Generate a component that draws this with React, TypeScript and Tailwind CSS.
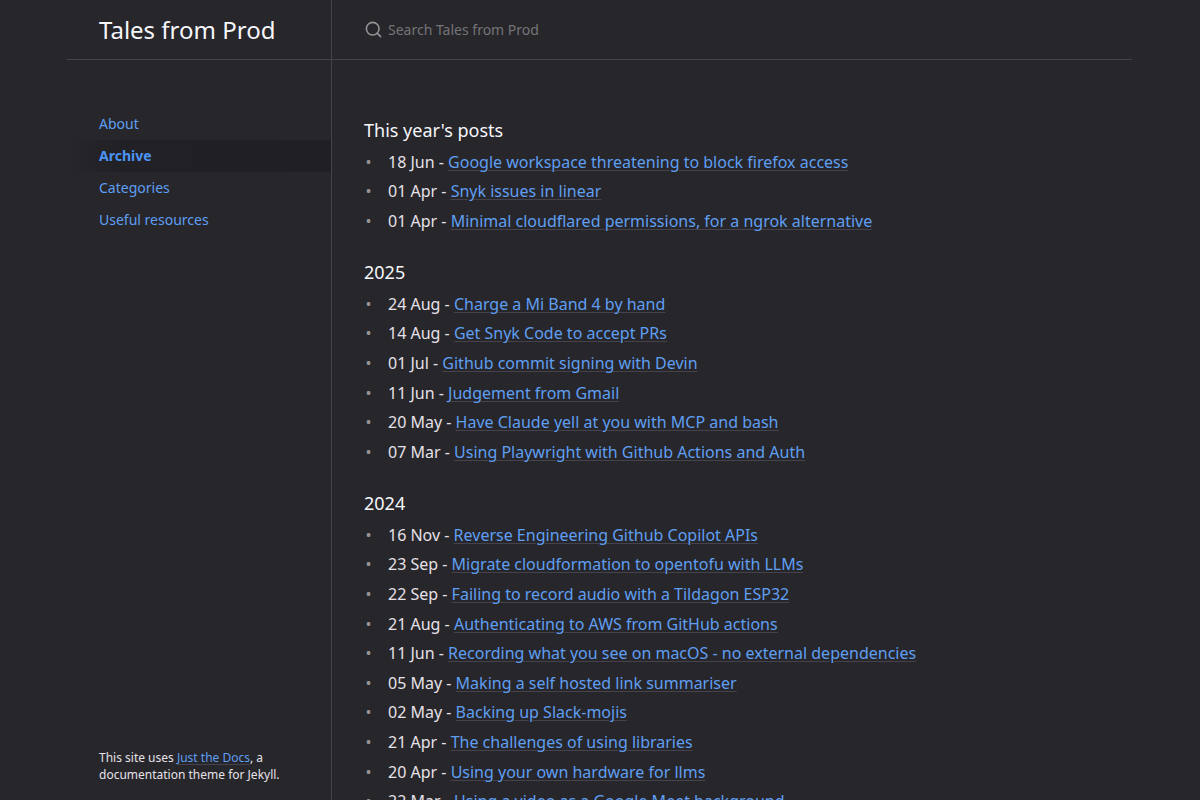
import { clsx } from "clsx";

type Post = { date: string; title: string };

const nav = ["About", "Archive", "Categories", "Useful resources"];

const years: { heading: string; posts: Post[] }[] = [
  {
    heading: "This year's posts",
    posts: [
      { date: "18 Jun", title: "Google workspace threatening to block firefox access" },
      { date: "01 Apr", title: "Snyk issues in linear" },
      { date: "01 Apr", title: "Minimal cloudflared permissions, for a ngrok alternative" },
    ],
  },
  {
    heading: "2025",
    posts: [
      { date: "24 Aug", title: "Charge a Mi Band 4 by hand" },
      { date: "14 Aug", title: "Get Snyk Code to accept PRs" },
      { date: "01 Jul", title: "Github commit signing with Devin" },
      { date: "11 Jun", title: "Judgement from Gmail" },
      { date: "20 May", title: "Have Claude yell at you with MCP and bash" },
      { date: "07 Mar", title: "Using Playwright with Github Actions and Auth" },
    ],
  },
  {
    heading: "2024",
    posts: [
      { date: "16 Nov", title: "Reverse Engineering Github Copilot APIs" },
      { date: "23 Sep", title: "Migrate cloudformation to opentofu with LLMs" },
      { date: "22 Sep", title: "Failing to record audio with a Tildagon ESP32" },
      { date: "21 Aug", title: "Authenticating to AWS from GitHub actions" },
      { date: "11 Jun", title: "Recording what you see on macOS - no external dependencies" },
      { date: "05 May", title: "Making a self hosted link summariser" },
      { date: "02 May", title: "Backing up Slack-mojis" },
      { date: "21 Apr", title: "The challenges of using libraries" },
      { date: "20 Apr", title: "Using your own hardware for llms" },
      { date: "22 Mar", title: "Using a video as a Google Meet background" },
    ],
  },
];

const linkClass = "text-[#5f9ff2] underline decoration-[#44434d] decoration-1 underline-offset-2";

function Sidebar() {
  return (
    <div className="flex h-full w-[332px] shrink-0 flex-col items-end border-r border-[#44434d]">
      <div className="flex h-[60px] w-[264px] shrink-0 items-center border-b border-[#44434d] px-8">
        <a href="#" className="text-2xl leading-[30px] text-[#f5f6fa]">Tales from Prod</a>
      </div>
      <nav className="mt-12 w-[264px] flex-1">
        {nav.map((item) => (
          <a
            key={item}
            href="#"
            className={clsx(
              "block h-8 px-8 text-sm leading-8",
              item === "Archive"
                ? "bg-[linear-gradient(-90deg,#201f23_0%,rgba(32,31,35,0.8)_80%,rgba(32,31,35,0)_100%)] font-bold text-[#4c94f6]"
                : "text-[#5f9ff2]"
            )}
          >
            {item}
          </a>
        ))}
      </nav>
      <footer className="w-[264px] px-8 pb-4 text-xs leading-[16.8px] text-[#e6e1e8]">
        This site uses <a href="#" className={linkClass}>Just the Docs</a>, a documentation theme for Jekyll.
      </footer>
    </div>
  );
}

function SearchBar() {
  return (
    <div className="flex h-[60px] items-center border-b border-[#44434d] pl-8">
      <svg className="size-[19px] text-[#959396]" viewBox="0 0 24 24" fill="none" stroke="currentColor" strokeWidth="2" strokeLinecap="round" strokeLinejoin="round">
        <circle cx="11" cy="11" r="8" />
        <line x1="21" y1="21" x2="16.65" y2="16.65" />
      </svg>
      <input
        type="text"
        placeholder="Search Tales from Prod"
        className="ml-[5px] h-full flex-1 bg-transparent text-sm text-[#e6e1e8] outline-none placeholder:text-[#757477]"
      />
    </div>
  );
}

export default function App() {
  return (
    <div className="flex h-screen overflow-hidden bg-[#27262b] font-['Noto_Sans',sans-serif] text-[#e6e1e8]">
      <Sidebar />
      <div className="h-full w-[800px]">
        <SearchBar />
        <main className="px-8 pt-[59px]">
          {years.map((year) => (
            <section key={year.heading} className="mb-[27px]">
              <h2 className="mb-2 text-lg leading-[22.5px] text-[#f5f6fa]">{year.heading}</h2>
              <ul className="space-y-1">
                {year.posts.map((post) => (
                  <li key={post.title} className="flex leading-[25.6px]">
                    <span className="w-6 shrink-0 pl-[1.6px] text-[#959396]">•</span>
                    <div>
                      {post.date} - <a href="#" className={linkClass}>{post.title}</a>
                    </div>
                  </li>
                ))}
              </ul>
            </section>
          ))}
        </main>
      </div>
    </div>
  );
}
